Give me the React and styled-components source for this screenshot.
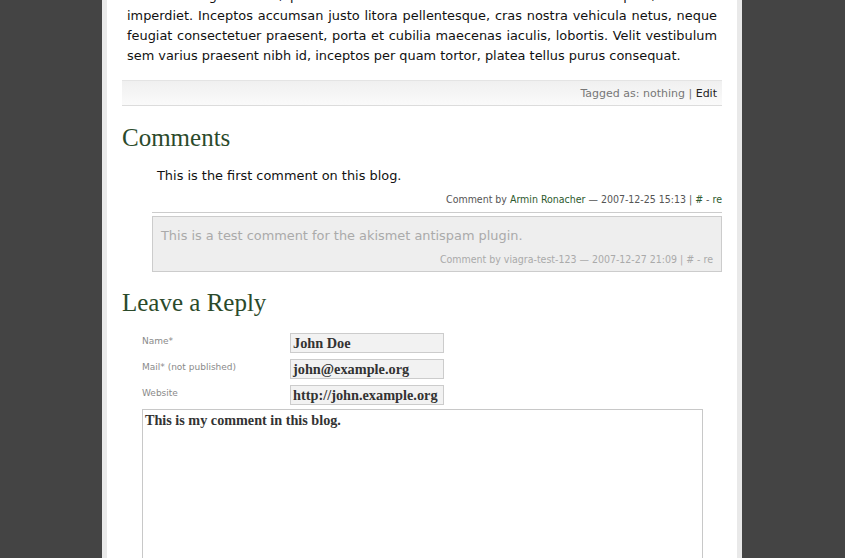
import React from "react";
import styled, { createGlobalStyle } from "styled-components";

const Global = createGlobalStyle`
  html, body { margin: 0; padding: 0; background: #444444; overflow: hidden; }
  body { font-family: "DejaVu Sans", Verdana, sans-serif; }
`;

const Page = styled.div`
  width: 630px;
  margin-left: 102px;
  height: 558px;
  background: #ffffff;
  border-left: 5px solid #e9e9e9;
  border-right: 5px solid #e9e9e9;
  overflow: hidden;
`;

const Content = styled.div`
  margin-top: -14px;
  padding: 0 15px;
`;

const Body = styled.p`
  margin: 0;
  padding: 0 5px;
  font-size: 12.9px;
  line-height: 20px;
  color: #111;
  text-align: justify;
`;

const TagBar = styled.div`
  margin-top: 14px;
  height: 24px;
  border-top: 1px solid #e4e4e4;
  border-bottom: 1px solid #dcdcdc;
  background: linear-gradient(#f0f0f0, #fafafa);
  display: flex;
  align-items: center;
  justify-content: flex-end;
  padding-right: 5px;
  font-size: 11px;
  color: #777;
`;

const Strong = styled.span`
  color: #222;
`;

const Heading = styled.h2`
  margin: 0;
  font-family: "Liberation Serif", Georgia, serif;
  font-weight: normal;
  font-size: 25px;
  color: #2b4a2b;
  height: 34px;
  line-height: 34px;
  margin-top: ${(p) => p.$mt}px;
`;

const CommentList = styled.div`
  margin-left: 30px;
  display: flex;
  flex-direction: column;
  gap: 3px;
`;

const Comment = styled.div`
  box-sizing: border-box;
  padding: ${(p) => (p.$spam ? "9px 8px 0 8px" : "11px 0 0 5px")};
  background: ${(p) => (p.$spam ? "#eeeeee" : "transparent")};
  border: ${(p) => (p.$spam ? "1px solid #cccccc" : "none")};
  border-bottom: 1px solid #cccccc;
  height: ${(p) => (p.$spam ? 56 : 58)}px;
`;

const CommentText = styled.div`
  font-size: 12.9px;
  line-height: 20px;
  color: ${(p) => (p.$spam ? "#aaaaaa" : "#111")};
`;

const Meta = styled.div`
  margin-top: 6px;
  font-family: "DejaVu Sans Condensed", "DejaVu Sans", sans-serif;
  font-stretch: condensed;
  font-size: 10.5px;
  line-height: 14px;
  text-align: right;
  color: ${(p) => (p.$spam ? "#aaaaaa" : "#555")};
`;

const Link = styled.span`
  color: ${(p) => (p.$spam ? "#aaaaaa" : "#2e5a2e")};
`;

const Form = styled.div`
  padding-left: 20px;
  margin-top: 13px;
  display: flex;
  flex-direction: column;
  gap: 4px;
`;

const Fields = styled.div`
  display: flex;
  flex-direction: column;
  gap: 6px;
`;

const Row = styled.div`
  display: grid;
  grid-template-columns: 148px 154px;
  height: 20px;
`;

const Label = styled.label`
  font-size: 9px;
  color: #8a8a8a;
  padding-top: 3px;
`;

const Input = styled.div`
  box-sizing: border-box;
  height: 20px;
  background: #f2f2f2;
  border: 1px solid #cccccc;
  font-family: "Liberation Serif", Georgia, serif;
  font-weight: bold;
  font-size: 14.3px;
  line-height: 18px;
  padding-left: 2px;
  color: #333;
  white-space: nowrap;
  overflow: hidden;
`;

const TextArea = styled.div`
  box-sizing: border-box;
  width: 561px;
  height: 200px;
  border: 1px solid #c8c8c8;
  border-bottom: none;
  font-family: "Liberation Serif", Georgia, serif;
  font-weight: bold;
  font-size: 14.2px;
  line-height: 18px;
  padding: 1px 0 0 2px;
  color: #333;
`;

export default function App() {
  return (
    <>
      <Global />
      <Page>
        <Content>
          <Body>
            vehicula magna lectus, pharetra class malesuada lobortis commodo inceptos, class sit
            imperdiet. Inceptos accumsan justo litora pellentesque, cras nostra vehicula netus, neque
            feugiat consectetuer praesent, porta et cubilia maecenas iaculis, lobortis. Velit vestibulum
            sem varius praesent nibh id, inceptos per quam tortor, platea tellus purus consequat.
          </Body>
          <TagBar>
            Tagged as: nothing&nbsp;|&nbsp;<Strong>Edit</Strong>
          </TagBar>
          <Heading $mt={15}>Comments</Heading>
          <CommentList>
            <Comment>
              <CommentText>This is the first comment on this blog.</CommentText>
              <Meta>
                Comment by <Link>Armin Ronacher</Link> — 2007-12-25 15:13 | <Link>#</Link> - <Link>re</Link>
              </Meta>
            </Comment>
            <Comment $spam>
              <CommentText $spam>This is a test comment for the akismet antispam plugin.</CommentText>
              <Meta $spam>
                Comment by viagra-test-123 — 2007-12-27 21:09 | # - re
              </Meta>
            </Comment>
          </CommentList>
          <Heading $mt={14}>Leave a Reply</Heading>
          <Form>
            <Fields>
              <Row>
                <Label>Name*</Label>
                <Input>John Doe</Input>
              </Row>
              <Row>
                <Label>Mail* (not published)</Label>
                <Input>john@example.org</Input>
              </Row>
              <Row>
                <Label>Website</Label>
                <Input>http://john.example.org</Input>
              </Row>
            </Fields>
            <TextArea>This is my comment in this blog.</TextArea>
          </Form>
        </Content>
      </Page>
    </>
  );
}
